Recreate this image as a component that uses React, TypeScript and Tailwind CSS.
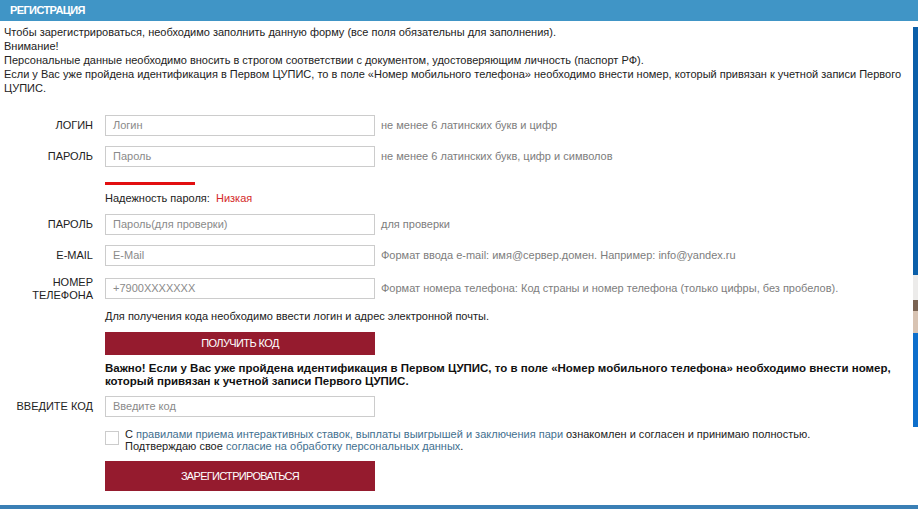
import React from "react";

const font = { fontFamily: '"Liberation Sans", Arial, sans-serif' };

function Row({ label, placeholder, hint, twoLine }: { label: React.ReactNode; placeholder: string; hint?: string; twoLine?: boolean }) {
  return (
    <div className={`flex items-center ${twoLine ? "h-[29px]" : "h-[21px]"}`}>
      <div className="w-[93px] text-right text-[11px] leading-[13px] text-[#222]">{label}</div>
      <div className="ml-[12px] h-[21px] w-[270px] border border-[#cccccc] bg-white flex items-center px-[7px] text-[11px] text-[#8a8a8a]">
        {placeholder}
      </div>
      {hint && <div className="ml-[6px] text-[11px] text-[#7d7d7d] whitespace-nowrap">{hint}</div>}
    </div>
  );
}

export default function App() {
  return (
    <div className="w-[918px] h-[509px] bg-white overflow-hidden flex flex-col" style={font}>
      <div className="h-[21px] bg-[#4095c6] flex items-center pl-[10px] shrink-0">
        <span className="text-white text-[11px] font-bold tracking-[-0.6px]">РЕГИСТРАЦИЯ</span>
      </div>
      <div className="flex flex-1 min-h-0">
        <div className="flex-1 flex flex-col">
          <div className="pt-[4px] pl-[4px] text-[11px] leading-[14px] text-[#222] whitespace-nowrap">
            <div>Чтобы зарегистрироваться, необходимо заполнить данную форму (все поля обязательны для заполнения).</div>
            <div>Внимание!</div>
            <div>Персональные данные необходимо вносить в строгом соответствии с документом, удостоверяющим личность (паспорт РФ).</div>
            <div>Если у Вас уже пройдена идентификация в Первом ЦУПИС, то в поле «Номер мобильного телефона» необходимо внести номер, который привязан к учетной записи Первого</div>
            <div>ЦУПИС.</div>
          </div>

          <div className="mt-[20px] flex flex-col">
            <Row label="ЛОГИН" placeholder="Логин" hint="не менее 6 латинских букв и цифр" />
            <div className="mt-[10px]">
              <Row label="ПАРОЛЬ" placeholder="Пароль" hint="не менее 6 латинских букв, цифр и символов" />
            </div>
            <div className="ml-[105px] mt-[15px] h-[3px] w-[90px] bg-[#e20f10]" />
            <div className="ml-[105px] mt-[6px] h-[14px] text-[11px] leading-[14px] text-[#222]">
              Надежность пароля:&nbsp; <span className="text-[#d42a2a]">Низкая</span>
            </div>
            <div className="mt-[9px]">
              <Row label="ПАРОЛЬ" placeholder="Пароль(для проверки)" hint="для проверки" />
            </div>
            <div className="mt-[10px]">
              <Row label="E-MAIL" placeholder="E-Mail" hint="Формат ввода e-mail: имя@сервер.домен. Например: info@yandex.ru" />
            </div>
            <div className="mt-[8px]">
              <Row
                twoLine
                label={<><div>НОМЕР</div><div>ТЕЛЕФОНА</div></>}
                placeholder="+7900XXXXXXX"
                hint="Формат номера телефона: Код страны и номер телефона (только цифры, без пробелов)."
              />
            </div>
            <div className="ml-[105px] mt-[6px] h-[14px] text-[11px] leading-[14px] text-[#222]">
              Для получения кода необходимо ввести логин и адрес электронной почты.
            </div>
            <div className="ml-[105px] mt-[9px] h-[23px] w-[270px] bg-[#951b2e] flex items-center justify-center text-white text-[11px] tracking-[-0.6px]">
              ПОЛУЧИТЬ КОД
            </div>
            <div className="ml-[105px] mt-[7px] text-[11.5px] leading-[13px] font-bold text-[#111] whitespace-nowrap">
              <div>Важно! Если у Вас уже пройдена идентификация в Первом ЦУПИС, то в поле «Номер мобильного телефона» необходимо внести номер,</div>
              <div>который привязан к учетной записи Первого ЦУПИС.</div>
            </div>
            <div className="mt-[8px]">
              <Row label="ВВЕДИТЕ КОД" placeholder="Введите код" />
            </div>
            <div className="ml-[105px] mt-[11px] flex items-start">
              <div className="mt-[3px] h-[14px] w-[14px] border border-[#cccccc] bg-white shrink-0" />
              <div className="ml-[6px] text-[11px] leading-[12px] text-[#222]">
                <div>
                  С <span className="text-[#43708f]">правилами приема интерактивных ставок, выплаты выигрышей и заключения пари</span> ознакомлен и согласен и принимаю полностью.
                </div>
                <div>
                  Подтверждаю свое <span className="text-[#43708f]">согласие на обработку персональных данных</span>.
                </div>
              </div>
            </div>
            <div className="ml-[105px] mt-[9px] h-[30px] w-[270px] bg-[#951b2e] flex items-center justify-center text-white text-[11px] tracking-[-0.7px]">
              ЗАРЕГИСТРИРОВАТЬСЯ
            </div>
          </div>
        </div>
        <div className="w-[5px] shrink-0 flex flex-col pt-[6px]">
          <div className="h-[248px] bg-[#0b5fa9]" />
          <div className="h-[25px] bg-[#ecebea]" />
          <div className="h-[11px] bg-[#7a6352]" />
          <div className="h-[22px] bg-[#d8c3b2]" />
          <div className="h-[94px] bg-[#0e6fcb]" />
        </div>
      </div>
      <div className="h-[4px] bg-[#3a7fb5] shrink-0" />
    </div>
  );
}
